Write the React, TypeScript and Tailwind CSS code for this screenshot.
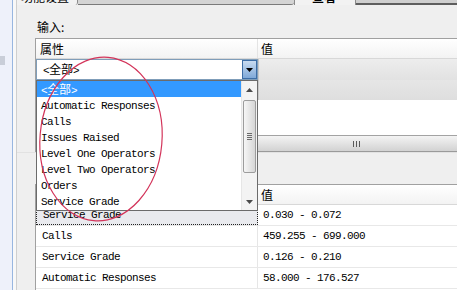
import React from 'react';

const mono = "font-['Liberation_Mono',monospace] text-[11px] tracking-[-0.6px]";
const cjk = "font-['Noto_Sans_CJK_SC','Noto_Sans',sans-serif] text-[12px]";

const items = [
  'Automatic Responses',
  'Calls',
  'Issues Raised',
  'Level One Operators',
  'Level Two Operators',
  'Orders',
  'Service Grade',
];

const rows = [
  ['Service Grade', '0.030 - 0.072'],
  ['Calls', '459.255 - 699.000'],
  ['Service Grade', '0.126 - 0.210'],
  ['Automatic Responses', '58.000 - 176.527'],
];

const All = () => (
  <span className={cjk}>
    <span className={mono}>&lt;</span>全部<span className={mono}>&gt;</span>
  </span>
);

const Caret = ({ down }: { down?: boolean }) => (
  <svg width="7" height="4" viewBox="0 0 7 4">
    <path d={down ? 'M0 0h7L3.5 4z' : 'M0 4h7L3.5 0z'} fill="#4a4a4a" />
  </svg>
);

const Dropdown = () => (
  <div className="absolute left-[36px] top-[80px] w-[222px] h-[131px] border border-[#6b6b6b] bg-white flex">
    <div className="flex-1 flex flex-col">
      <div className="h-[16px] bg-[#3399ff] text-white pl-[4px] pt-[2px] flex items-center leading-none">
        <All />
      </div>
      {items.map((it) => (
        <div key={it} className={`h-[16px] pl-[4px] pt-[2px] flex items-center leading-none text-black ${mono}`}>
          {it}
        </div>
      ))}
    </div>
    <div className="w-[16px] flex flex-col bg-[#f3f3f3] border-l border-[#e6e6e6]">
      <div className="h-[17px] flex items-center justify-center">
        <Caret />
      </div>
      <div className="mt-[2px] h-[73px] mx-[1px] rounded-[2px] border border-[#9c9c9c] bg-gradient-to-r from-[#f6f6f6] to-[#d6d6d6] flex items-center justify-center">
        <div className="flex flex-col gap-[1px]">
          <div className="w-[5px] h-[1px] bg-[#6a6a6a]" />
          <div className="w-[5px] h-[1px] bg-[#6a6a6a]" />
          <div className="w-[5px] h-[1px] bg-[#6a6a6a]" />
          <div className="w-[5px] h-[1px] bg-[#6a6a6a]" />
        </div>
      </div>
      <div className="flex-1" />
      <div className="h-[16px] flex items-center justify-center">
        <Caret down />
      </div>
    </div>
  </div>
);

const App = () => {
  return (
    <div className="relative w-[457px] h-[290px] overflow-hidden flex bg-[#efefef] text-black">
      {/* left dock edge */}
      <div className="w-[12px] bg-[#eef1fa] flex flex-col">
        <div className="mt-[56px] w-[5px] h-[9px] bg-[#c9ced8]" />
      </div>
      <div className="w-[1px] bg-[#98b6e0]" />
      <div className="w-[3px] bg-[#f8f8f8]" />
      <div className="w-[1px] bg-[#cfcfcf]" />

      <div className="flex-1 flex flex-col">
        {/* tab strip, cut off at the top */}
        <div className="h-[5px] flex overflow-hidden">
          <div className={`w-[61px] border-r border-[#8a8a8a] rounded-br-[3px] bg-[#f2f2f2] pl-[4px] leading-[12px] ${cjk}`}>
            <div className="-mt-[9px]">功能设置</div>
          </div>
          <div className="w-[216px] bg-[#d4d4d4] border-b border-[#7a7a7a] rounded-br-[3px]" />
          <div className={`w-[62px] border-x border-[#8a8a8a] bg-[#f2f2f2] pl-[17px] leading-[12px] font-bold ${cjk}`}>
            <div className="-mt-[9px]">查看</div>
          </div>
          <div className="flex-1 bg-[#cfcfcf] border-b-2 border-[#5e5e5e]" />
        </div>

        <div className="h-[33px] pl-[20px] pt-[15px]">
          <div className={`leading-[14px] ${cjk}`}>输入:</div>
        </div>

        {/* first grid */}
        <div className="ml-[18px] border-t border-l border-[#a0a0a0] flex flex-col bg-white">
          <div className={`h-[20px] flex border-b border-[#d8d8d8] bg-gradient-to-b from-white to-[#f3f3f3] ${cjk}`}>
            <div className="w-[222px] pl-[4px] flex items-center border-r border-[#e4e4e4]">属性</div>
            <div className="flex-1 pl-[3px] flex items-center">值</div>
          </div>
          <div className="h-[21px] flex">
            <div className="w-[222px] flex border border-[#7f9db9] bg-white">
              <div className="flex-1 pl-[6px] flex items-center leading-none">
                <All />
              </div>
              <div className="w-[15px] border border-[#3d6ea6] bg-gradient-to-b from-[#c9dcf1] to-[#7fa9d8] flex items-center justify-center">
                <svg width="7" height="4" viewBox="0 0 7 4">
                  <path d="M0 0h7L3.5 4z" fill="#000" />
                </svg>
              </div>
            </div>
            <div className="flex-1 border-l border-[#c8c8c8] bg-gradient-to-b from-[#ededed] to-[#e2e2e2]" />
          </div>
          <div className="h-[20px] flex">
            <div className="w-[222px] bg-[#e6e6e6]" />
            <div className="flex-1 border-l border-[#c8c8c8] bg-gradient-to-b from-[#e6e6e6] to-[#dedede]" />
          </div>
          <div className="h-[35px] bg-white" />
          <div className="h-[17px] border-t border-[#a3a3a3] border-b border-b-[#9a9a9a] bg-gradient-to-b from-[#f4f4f4] to-[#d2d2d2] flex items-center pl-[317px]">
            <div className="flex gap-[2px]">
              <div className="w-[1px] h-[6px] bg-[#5a5a5a]" />
              <div className="w-[1px] h-[6px] bg-[#5a5a5a]" />
              <div className="w-[1px] h-[6px] bg-[#5a5a5a]" />
            </div>
          </div>
        </div>

        <div className="h-[32px] border-t border-[#e2e2e2]" />

        {/* second grid */}
        <div className="ml-[18px] flex-1 border-t border-l border-[#a0a0a0] flex flex-col bg-white">
          <div className={`h-[20px] flex border-b border-[#d8d8d8] bg-gradient-to-b from-white to-[#f3f3f3] ${cjk}`}>
            <div className="w-[222px] pl-[4px] flex items-center border-r border-[#e4e4e4]">属性</div>
            <div className="flex-1 pl-[3px] flex items-center">值</div>
          </div>
          {rows.map(([k, v], i) => (
            <div key={i} className={`h-[21px] flex border-b border-[#e8e8e8] ${mono}`}>
              <div
                className={
                  i === 0
                    ? 'w-[222px] pl-[6px] pt-[1px] flex items-center bg-[#e9eaee] border border-dotted border-[#222]'
                    : 'w-[222px] pl-[6px] pt-[1px] flex items-center border-r border-[#e6e6e6]'
                }
              >
                {k}
              </div>
              <div className="flex-1 pl-[5px] pt-[1px] flex items-center">{v}</div>
            </div>
          ))}
        </div>
      </div>

      <Dropdown />

      <svg className="absolute left-0 top-0 pointer-events-none" width="457" height="290">
        <ellipse
          cx="101"
          cy="139"
          rx="61"
          ry="82"
          transform="rotate(5 101 139)"
          fill="none"
          stroke="#d3345a"
          strokeWidth="1.2"
        />
      </svg>
    </div>
  );
};

export default App;
